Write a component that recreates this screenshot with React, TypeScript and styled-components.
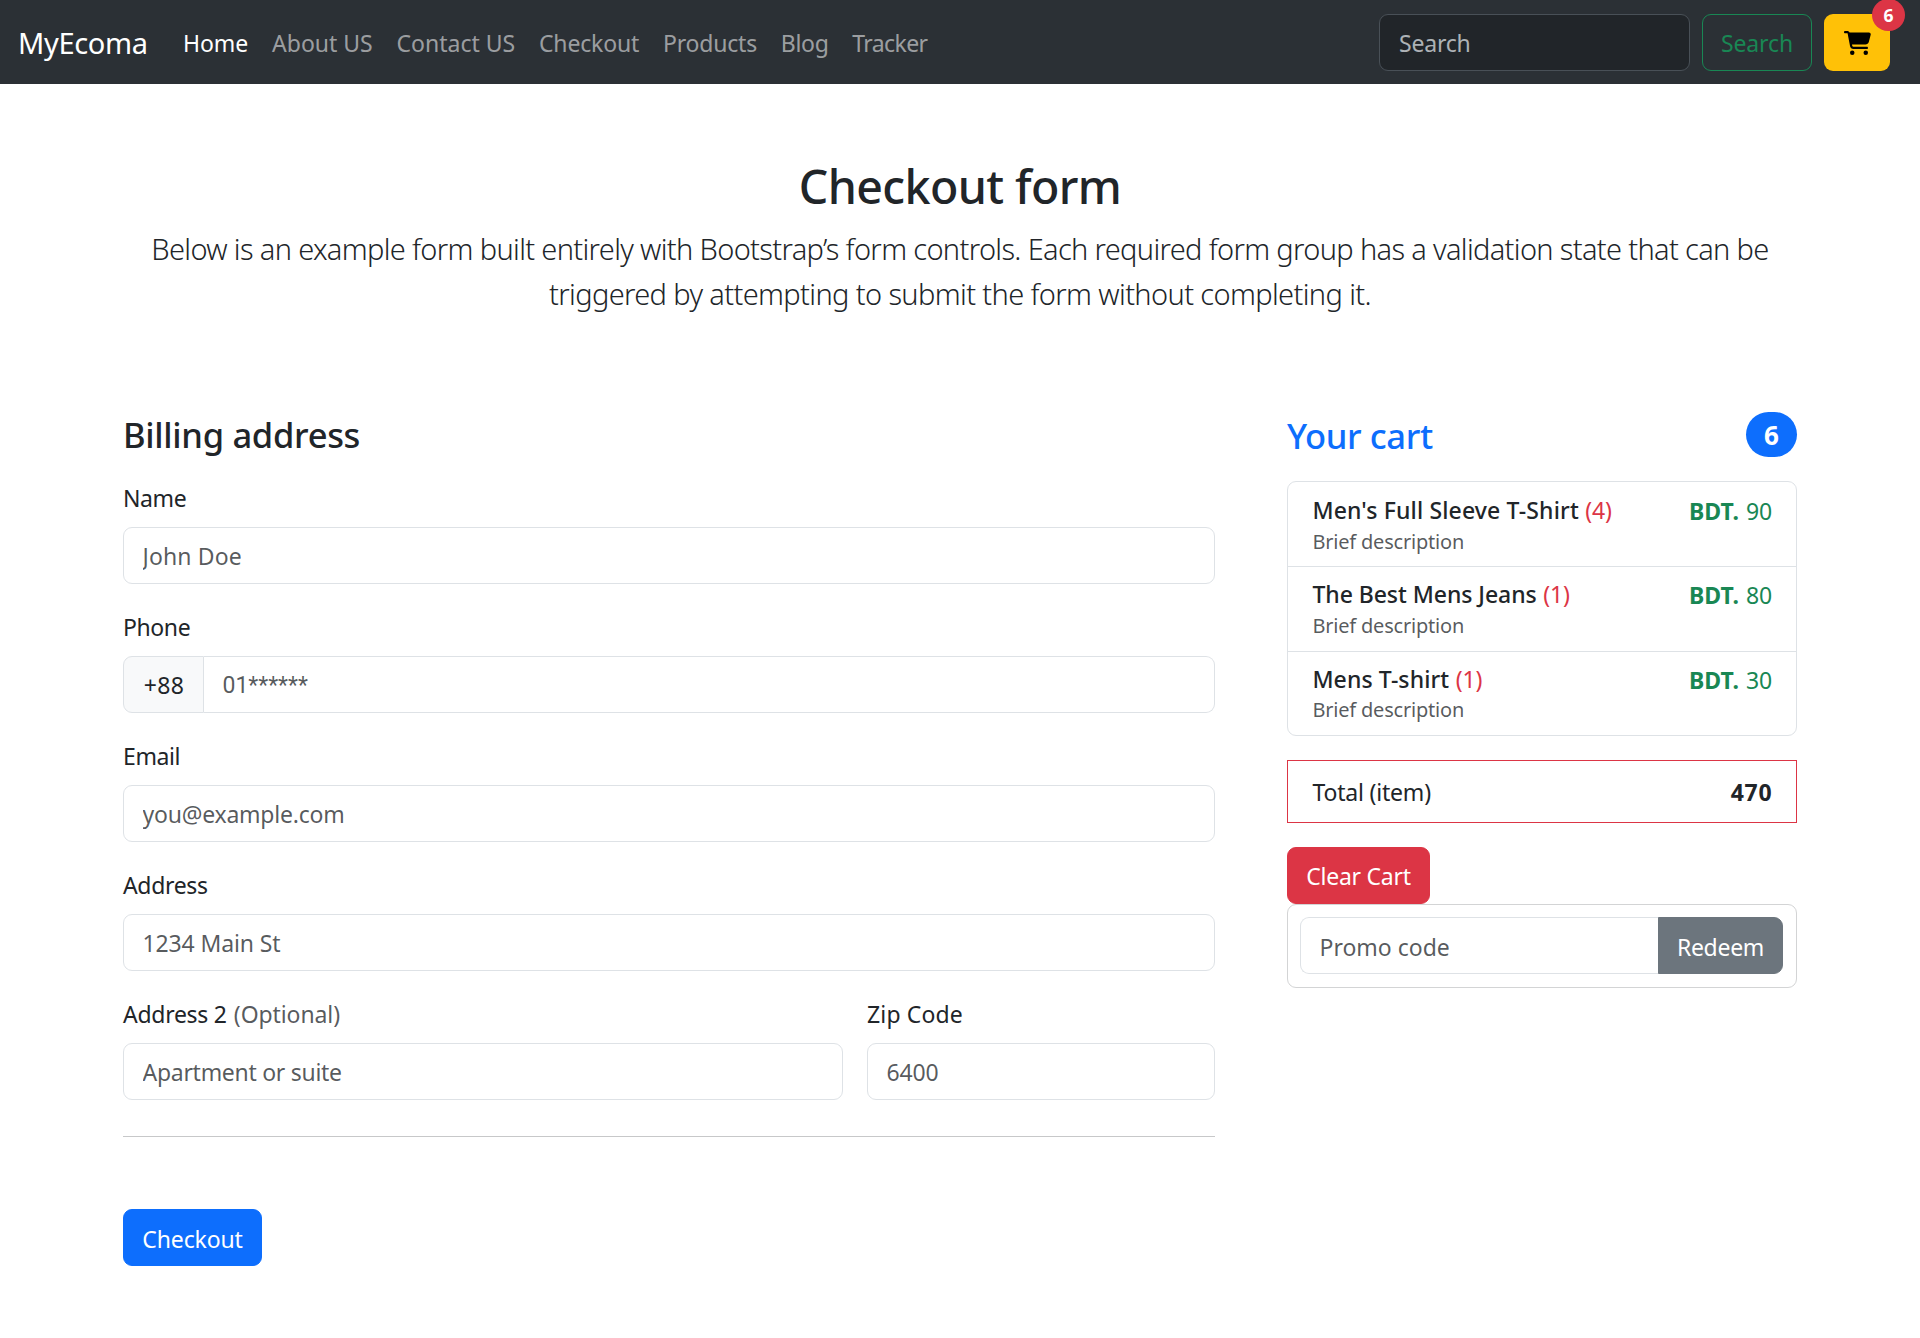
import React from 'react';
import styled, { createGlobalStyle } from 'styled-components';
import { FaCartShopping } from 'react-icons/fa6';

const color = {
  blue: '#0d6efd',
  red: '#dc3545',
  green: '#198754',
  yellow: '#ffc107',
  gray: '#6c757d',
  border: '#dee2e6',
  body: '#212529',
  muted: 'rgba(33, 37, 41, 0.75)',
};

const GlobalStyle = createGlobalStyle`
  *, *::before, *::after { box-sizing: border-box; }
  body {
    margin: 0;
    background: #fff;
    color: ${color.body};
    font-family: "Noto Sans", "Open Sans", sans-serif;
    font-size: 23px;
    line-height: 36px;
  }
  h2, h4, h6, p, ul { margin: 0; padding: 0; }
  input, button { font: inherit; margin: 0; }
`;

type Track = { $track?: number };
const track = (p: Track) => `${p.$track ?? -0.15}px`;

/* ---------- Navbar ---------- */

const Navbar = styled.nav`
  display: flex;
  align-items: center;
  height: 84px;
  padding: 0 30px 0 18px;
  background: #2b3035;
`;

const Brand = styled.a`
  margin-right: 23.5px;
  padding-top: 1px;
  color: #fff;
  font-size: 29px;
  line-height: 45px;
  letter-spacing: -0.35px;
`;

const NavList = styled.ul`
  display: flex;
  flex: 1;
  list-style: none;
`;

const NavLink = styled.li<Track & { $active?: boolean }>`
  padding: 1px 11.9px 0;
  color: ${(p) => (p.$active ? '#fff' : 'rgba(255, 255, 255, 0.55)')};
  letter-spacing: ${track};
`;

const SearchForm = styled.form`
  display: flex;
  gap: 12px;
`;

const SearchBox = styled.div`
  width: 311px;
`;

/* ---------- Controls ---------- */

const Input = styled.input<
  Track & { $dark?: boolean; $joined?: 'left' | 'right'; $numeric?: boolean }
>`
  flex: 1;
  width: 100%;
  min-width: 0;
  height: 57px;
  padding: ${(p) => (p.$dark || p.$numeric ? 2 : 1)}px 18px 0 ${(p) => (p.$dark ? 19 : 18.5)}px;
  border: 1px solid ${(p) => (p.$dark ? '#495057' : color.border)};
  border-radius: ${(p) =>
    p.$joined === 'left' ? '0 9px 9px 0' : p.$joined === 'right' ? '9px 0 0 9px' : '9px'};
  ${(p) => p.$joined === 'right' && 'border-right: 0;'}
  ${(p) => p.$joined === 'left' && 'border-left: 0;'}
  outline: 0;
  background: ${(p) => (p.$dark ? color.body : '#fff')};
  color: ${(p) => (p.$dark ? '#dee2e6' : color.body)};
  ${(p) => p.$numeric && 'font-family: Roboto, "Liberation Sans", sans-serif;'}

  &::placeholder {
    color: ${(p) => (p.$dark ? 'rgba(222, 226, 230, 0.75)' : color.muted)};
    letter-spacing: ${track};
    opacity: 1;
  }
`;

const Button = styled.button<
  Track & { $bg: string; $width: number; $outline?: boolean; $joined?: boolean; $drop?: number }
>`
  flex: none;
  width: ${(p) => p.$width}px;
  height: 57px;
  padding: ${(p) => p.$drop ?? 2}px 0 0;
  border: 1px solid ${(p) => p.$bg};
  border-radius: ${(p) => (p.$joined ? '0 9px 9px 0' : '9px')};
  background: ${(p) => (p.$outline ? 'transparent' : p.$bg)};
  color: ${(p) => (p.$outline ? p.$bg : '#fff')};
  letter-spacing: ${track};
  white-space: nowrap;
`;

const CartButton = styled.button`
  position: relative;
  display: flex;
  align-items: center;
  justify-content: center;
  width: 66px;
  height: 57px;
  padding: 1px 0 0;
  border: 0;
  border-radius: 9px;
  background: ${color.yellow};
  color: #000;

  svg {
    width: 27px;
    height: 24px;
  }
`;

const CartCount = styled.span`
  position: absolute;
  top: -15px;
  left: 48px;
  width: 33px;
  height: 32.5px;
  border-radius: 17px;
  background: ${color.red};
  color: #fff;
  font-size: 17.5px;
  font-weight: 700;
  line-height: 33px;
  text-align: center;
`;

/* ---------- Page ---------- */

const Container = styled.main`
  width: 1710px;
  margin: 0 auto;
  padding: 0 18px;
`;

const Intro = styled.header`
  padding: 72px 0;
  margin-bottom: 24px;
  text-align: center;
`;

const Title = styled.h2`
  padding-top: 2px;
  margin-bottom: 12px;
  font-size: 46.5px;
  font-weight: 500;
  line-height: 56px;
  letter-spacing: -0.6px;
`;

const Lead = styled.p`
  font-size: 29px;
  font-weight: 300;
  line-height: 45px;
`;

const LeadLine = styled.span<Track>`
  display: block;
  letter-spacing: ${track};
  white-space: nowrap;
`;

const Columns = styled.div`
  display: grid;
  grid-template-columns: 1092px 510px;
  column-gap: 72px;
  align-items: start;
`;

const SectionTitle = styled.h4<Track & { $accent?: boolean }>`
  height: 43px;
  padding-top: 1px;
  color: ${(p) => (p.$accent ? color.blue : 'inherit')};
  font-size: 34.5px;
  font-weight: 500;
  line-height: 43px;
  letter-spacing: ${track};
`;

const Form = styled.form`
  display: flex;
  flex-direction: column;
  align-items: flex-start;
`;

const FieldGrid = styled.div`
  display: grid;
  grid-template-columns: 720px 348px;
  gap: 24px;
  margin-top: 24px;
`;

const Field = styled.div<{ $wide?: boolean }>`
  grid-column: ${(p) => (p.$wide ? '1 / -1' : 'auto')};
`;

const Label = styled.label<Track>`
  display: block;
  height: 36px;
  padding-top: 1px;
  margin-bottom: 12px;
  letter-spacing: ${track};
`;

const Muted = styled.span<Track>`
  margin-left: 1.5px;
  color: ${color.muted};
  letter-spacing: ${track};
`;

const InputGroup = styled.div`
  display: flex;
`;

const Prefix = styled.span`
  width: 81px;
  height: 57px;
  padding: 10px 0 0 1px;
  border: 1px solid ${color.border};
  border-radius: 9px 0 0 9px;
  background: #f8f9fa;
  letter-spacing: 0.3px;
  text-align: center;
`;

const Rule = styled.hr`
  width: 100%;
  height: 1px;
  margin: 36px 0 72px;
  border: 0;
  background: #c7c8c9;
`;

/* ---------- Cart ---------- */

const CartHeader = styled.div`
  display: flex;
  justify-content: space-between;
  height: 45px;
  margin-bottom: 24px;

  h4 { padding-top: 2px; }
`;

const CartTotalBadge = styled.span`
  width: 51px;
  height: 45px;
  padding-top: 1px;
  border-radius: 22.5px;
  background: ${color.blue};
  color: #fff;
  font-size: 26px;
  font-weight: 700;
  line-height: 45px;
  text-align: center;
`;

const CartList = styled.ul`
  height: 255px;
  border: 1px solid ${color.border};
  border-radius: 9px;
  list-style: none;
`;

const Description = styled.small`
  display: block;
  padding-top: 1px;
  color: ${color.muted};
  font-size: 20px;
  line-height: 31px;
  letter-spacing: -0.2px;
`;

const CartItem = styled.li`
  display: flex;
  justify-content: space-between;
  height: 84px;
  padding: 14px 24px 0 24.4px;
  line-height: 30px;

  & + & {
    height: 85px;
    border-top: 1px solid ${color.border};
    padding-top: 13px;
  }

  &:last-child ${Description} { margin-top: -1px; }
`;

const ItemName = styled.h6<Track>`
  display: flex;
  gap: 6.5px;
  font-size: 23px;
  font-weight: 500;
  line-height: 29px;
  letter-spacing: ${track};
`;

const Quantity = styled.span`
  color: ${color.red};
  font-weight: 400;
  letter-spacing: -0.2px;
`;

const Price = styled.span`
  color: ${color.green};
  letter-spacing: -0.1px;

  b { margin-right: 7px; letter-spacing: 0; }
`;

const TotalRow = styled.div`
  display: flex;
  justify-content: space-between;
  height: 63px;
  margin: 24px 0;
  padding: 13px 23.5px 0 24.5px;
  border: 1px solid ${color.red};
  letter-spacing: -0.2px;

  strong { letter-spacing: 0.8px; }
`;

const PromoCard = styled.form`
  display: flex;
  height: 84px;
  padding: 12px 13px 12px 12px;
  border: 1px solid #d3d4d5;
  border-radius: 9px;

  input { padding-top: 3px; }
`;

/* ---------- Data ---------- */

const links: { label: string; track: number }[] = [
  { label: 'Home', track: -0.05 },
  { label: 'About US', track: 0 },
  { label: 'Contact US', track: 0 },
  { label: 'Checkout', track: -0.15 },
  { label: 'Products', track: -0.2 },
  { label: 'Blog', track: -0.3 },
  { label: 'Tracker', track: -0.6 },
];

const items = [
  { name: "Men's Full Sleeve T-Shirt", qty: 4, price: 90, track: 0.15 },
  { name: 'The Best Mens Jeans', qty: 1, price: 80, track: -0.05 },
  { name: 'Mens T-shirt', qty: 1, price: 30, track: 0.1 },
];

export default function App() {
  return (
    <>
      <GlobalStyle />
      <Navbar>
        <Brand>MyEcoma</Brand>
        <NavList>
          {links.map((link, i) => (
            <NavLink key={link.label} $active={i === 0} $track={link.track}>
              {link.label}
            </NavLink>
          ))}
        </NavList>
        <SearchForm>
          <SearchBox>
            <Input $dark placeholder="Search" $track={-0.2} />
          </SearchBox>
          <Button type="button" $bg={color.green} $width={110} $outline $track={-0.1}>
            Search
          </Button>
          <CartButton type="button">
            <FaCartShopping />
            <CartCount>6</CartCount>
          </CartButton>
        </SearchForm>
      </Navbar>

      <Container>
        <Intro>
          <Title>Checkout form</Title>
          <Lead>
            <LeadLine $track={-0.66}>
              Below is an example form built entirely with Bootstrap’s form controls. Each required
              form group has a validation state that can be
            </LeadLine>
            <LeadLine $track={-0.63}>
              triggered by attempting to submit the form without completing it.
            </LeadLine>
          </Lead>
        </Intro>

        <Columns>
          <Form>
            <SectionTitle $track={-0.3}>Billing address</SectionTitle>
            <FieldGrid>
              <Field $wide>
                <Label $track={-0.4}>Name</Label>
                <Input placeholder="John Doe" $track={0.15} />
              </Field>
              <Field $wide>
                <Label $track={-0.4}>Phone</Label>
                <InputGroup>
                  <Prefix>+88</Prefix>
                  <Input $joined="left" $numeric placeholder="01******" $track={0} />
                </InputGroup>
              </Field>
              <Field $wide>
                <Label $track={-0.4}>Email</Label>
                <Input placeholder="you@example.com" $track={-0.22} />
              </Field>
              <Field $wide>
                <Label $track={-0.35}>Address</Label>
                <Input placeholder="1234 Main St" $track={-0.12} />
              </Field>
              <Field>
                <Label $track={-0.28}>
                  Address 2 <Muted $track={-0.1}>(Optional)</Muted>
                </Label>
                <Input placeholder="Apartment or suite" $track={-0.28} />
              </Field>
              <Field>
                <Label $track={0.15}>Zip Code</Label>
                <Input placeholder="6400" $track={-0.15} />
              </Field>
            </FieldGrid>
            <Rule />
            <Button type="button" $bg={color.blue} $width={139} $drop={3}>
              Checkout
            </Button>
          </Form>

          <aside>
            <CartHeader>
              <SectionTitle $accent $track={-0.38}>
                Your cart
              </SectionTitle>
              <CartTotalBadge>6</CartTotalBadge>
            </CartHeader>
            <CartList>
              {items.map((item) => (
                <CartItem key={item.name}>
                  <div>
                    <ItemName $track={item.track}>
                      {item.name} <Quantity>({item.qty})</Quantity>
                    </ItemName>
                    <Description>Brief description</Description>
                  </div>
                  <Price>
                    <b>BDT.</b>
                    {item.price}
                  </Price>
                </CartItem>
              ))}
            </CartList>
            <TotalRow>
              <span>Total (item)</span>
              <strong>470</strong>
            </TotalRow>
            <Button type="button" $bg={color.red} $width={143} $track={-0.27} $drop={1}>
              Clear Cart
            </Button>
            <PromoCard>
              <Input $joined="right" placeholder="Promo code" $track={0} />
              <Button type="button" $bg={color.gray} $width={125} $joined $track={-0.29} $drop={3}>
                Redeem
              </Button>
            </PromoCard>
          </aside>
        </Columns>
      </Container>
    </>
  );
}
